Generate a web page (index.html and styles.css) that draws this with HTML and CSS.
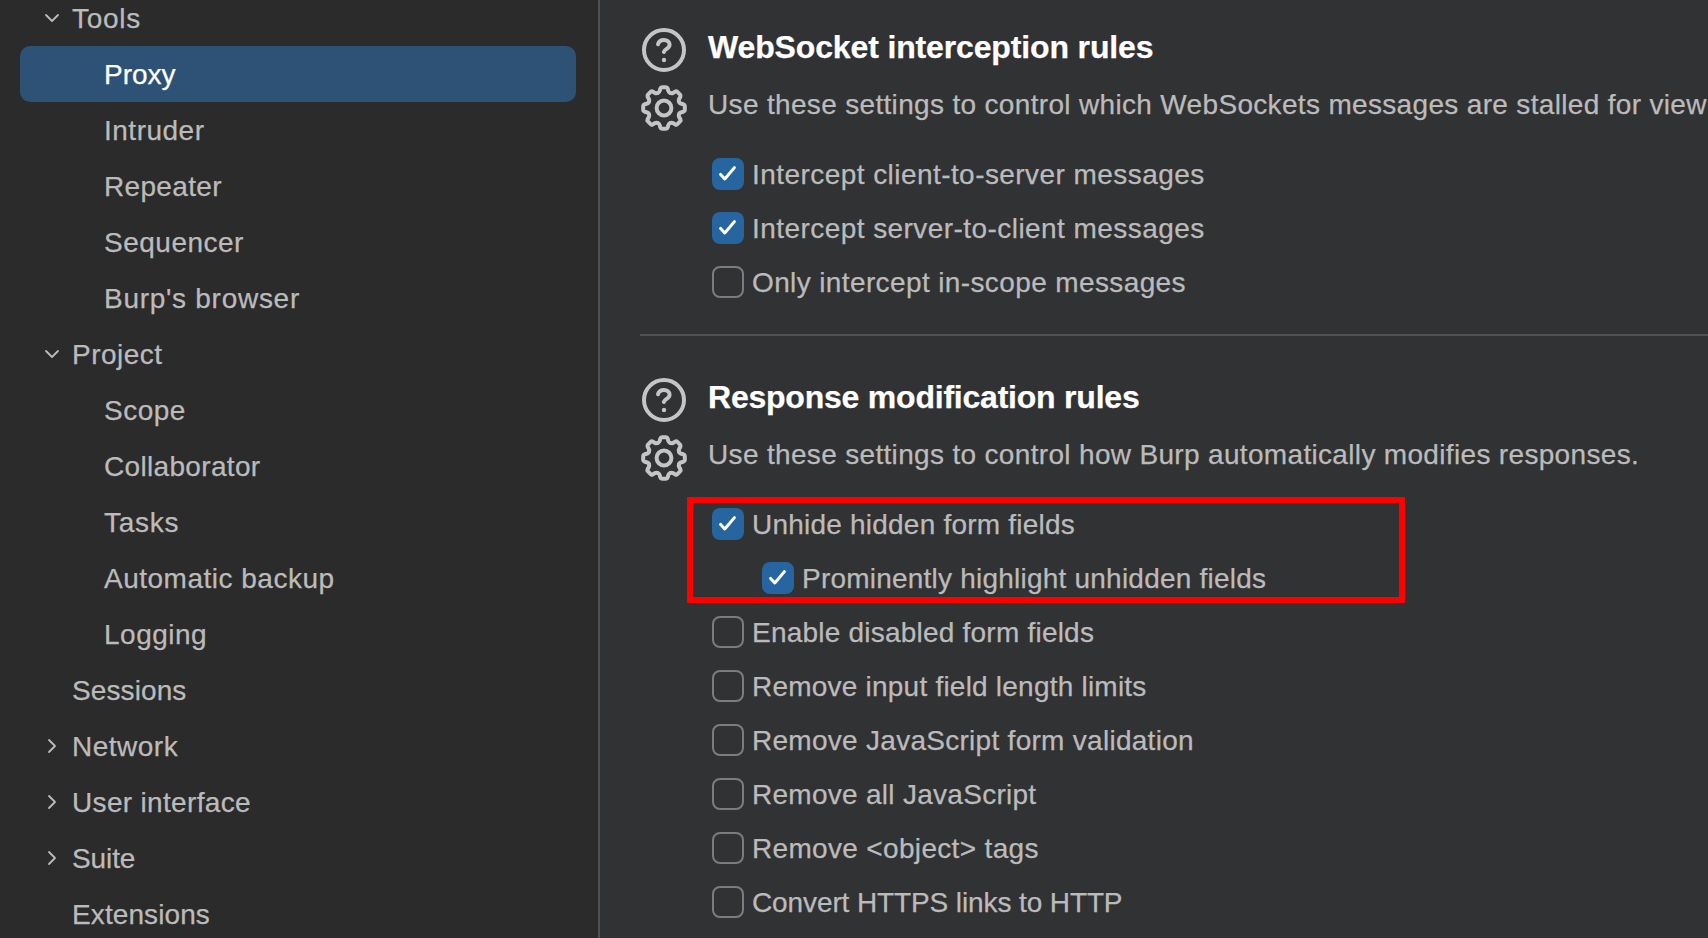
FILE: index.html
```html
<!DOCTYPE html>
<html lang="en">
<head>
<meta charset="utf-8">
<title>Settings</title>
<link rel="stylesheet" href="styles.css">
</head>
<body>
<svg class="defs" aria-hidden="true">
  <symbol id="down" viewBox="0 0 20 20"><path class="chevron-line" d="M4 7l6 6 6-6"/></symbol>
  <symbol id="right" viewBox="0 0 20 20"><path class="chevron-line" d="M7 4l6 6-6 6"/></symbol>
  <symbol id="tick" viewBox="0 0 32 32"><path class="tick-line" d="M8.6 16.4L12.8 21L22.4 9.6"/></symbol>
  <symbol id="help" viewBox="0 0 48 48">
    <circle class="icon-line" cx="24" cy="24" r="20"/>
    <path class="icon-line" d="M18 18.2C18.7 15.5 21 13.9 23.9 13.9c3.3 0 5.7 2 5.7 4.8 0 4.1-5.1 3.9-5.8 7.3"/>
    <circle class="icon-dot" cx="24" cy="34" r="2.2"/>
  </symbol>
  <symbol id="gear" viewBox="-24 -24 48 48">
    <g id="teeth">
      <path id="tooth" class="icon-line" d="M-6.2-15Q-4.6-15.65-4.2-17.4L-3.7-19.5Q-3.3-20.8-1.9-20.8H1.9Q3.3-20.8 3.7-19.5L4.2-17.4Q4.6-15.65 6.2-15"/>
      <use href="#tooth" transform="rotate(45)"/>
      <use href="#tooth" transform="rotate(90)"/>
      <use href="#tooth" transform="rotate(135)"/>
      <use href="#tooth" transform="rotate(180)"/>
      <use href="#tooth" transform="rotate(225)"/>
      <use href="#tooth" transform="rotate(270)"/>
      <use href="#tooth" transform="rotate(315)"/>
    </g>
    <circle class="icon-line" r="7.4"/>
  </symbol>
</svg>
<div class="app">
  <nav class="sidebar">
    <div class="row track-wide"><svg class="chevron"><use href="#down"/></svg>Tools</div>
    <div class="row child selected track-none">Proxy</div>
    <div class="row child track-loose">Intruder</div>
    <div class="row child">Repeater</div>
    <div class="row child track-loose">Sequencer</div>
    <div class="row child track-wide">Burp's browser</div>
    <div class="row track-loose"><svg class="chevron"><use href="#down"/></svg>Project</div>
    <div class="row child track-loose">Scope</div>
    <div class="row child">Collaborator</div>
    <div class="row child track-wide">Tasks</div>
    <div class="row child track-loose">Automatic backup</div>
    <div class="row child track-loose">Logging</div>
    <div class="row top track-slight">Sessions</div>
    <div class="row track-loose"><svg class="chevron"><use href="#right"/></svg>Network</div>
    <div class="row"><svg class="chevron"><use href="#right"/></svg>User interface</div>
    <div class="row track-tight"><svg class="chevron"><use href="#right"/></svg>Suite</div>
    <div class="row top track-slight">Extensions</div>
  </nav>
  <main class="content">
    <section class="section">
      <div class="icons"><svg class="icon"><use href="#help"/></svg><svg class="icon"><use href="#gear"/></svg></div>
      <div class="body">
        <h2 class="title">WebSocket interception rules</h2>
        <p class="desc">Use these settings to control which WebSockets messages are stalled for view</p>
        <div class="options">
          <label class="option track-option"><svg class="box on"><use href="#tick"/></svg>Intercept client-to-server messages</label>
          <label class="option track-option"><svg class="box on"><use href="#tick"/></svg>Intercept server-to-client messages</label>
          <label class="option track-scope"><span class="box off"></span>Only intercept in-scope messages</label>
        </div>
      </div>
    </section>
    <section class="section second">
      <div class="icons"><svg class="icon"><use href="#help"/></svg><svg class="icon"><use href="#gear"/></svg></div>
      <div class="body">
        <h2 class="title title-tight">Response modification rules</h2>
        <p class="desc">Use these settings to control how Burp automatically modifies responses.</p>
        <div class="options">
          <div class="highlight"></div>
          <label class="option track-form"><svg class="box on"><use href="#tick"/></svg>Unhide hidden form fields</label>
          <label class="option nested track-form"><svg class="box on"><use href="#tick"/></svg>Prominently highlight unhidden fields</label>
          <label class="option track-form"><span class="box off"></span>Enable disabled form fields</label>
          <label class="option track-form"><span class="box off"></span>Remove input field length limits</label>
          <label class="option track-script"><span class="box off"></span>Remove JavaScript form validation</label>
          <label class="option track-script"><span class="box off"></span>Remove all JavaScript</label>
          <label class="option"><span class="box off"></span>Remove &lt;object&gt; tags</label>
          <label class="option track-tight"><span class="box off"></span>Convert HTTPS links to HTTP</label>
        </div>
      </div>
    </section>
  </main>
</div>
</body>
</html>
```

FILE: styles.css
```css
* { box-sizing: border-box; }
body {
  margin: 0;
  overflow: hidden;
  background: #313234;
  color: #bbbbbb;
  font: 28px/40px "Liberation Sans", Arial, sans-serif;
  letter-spacing: 0.33px;
  -webkit-text-stroke: 0.25px currentColor;
}
.defs { display: none; }
.app { display: flex; height: 938px; overflow: hidden; }

/* Settings tree */
.sidebar {
  flex: none;
  width: 600px;
  height: 938px;
  overflow: hidden;
  background: #2b2b2b;
  border-right: 2px solid #515151;
}
.row {
  display: flex;
  align-items: center;
  height: 56px;
  margin: 0 22px 0 20px;
  padding: 2px 0 0 22px;
  border-radius: 10px;
  white-space: nowrap;
}
.row:first-child { margin-top: -10px; }
.child { padding-left: 84px; }
.top { padding-left: 52px; }
.selected { background: #2d5275; color: #ffffff; }
.chevron { width: 20px; height: 20px; margin: 0 10px 2px 0; }
.chevron-line { fill: none; stroke: #bbbbbb; stroke-width: 1.8; stroke-linecap: round; stroke-linejoin: round; }

/* Letter spacing */
.track-tight { letter-spacing: -0.11px; }
.track-none { letter-spacing: 0; }
.track-slight { letter-spacing: 0.1px; }
.track-form { letter-spacing: 0.22px; }
.track-script { letter-spacing: 0.28px; }
.track-scope { letter-spacing: 0.38px; }
.track-option { letter-spacing: 0.44px; }
.track-loose { letter-spacing: 0.5px; }
.track-wide { letter-spacing: 0.72px; }

/* Panels */
.content { flex: 1; min-width: 0; padding-left: 40px; }
.section {
  display: grid;
  grid-template-columns: 48px 1fr;
  column-gap: 20px;
  height: 336px;
  padding-top: 26px;
  border-bottom: 2px solid #515254;
}
.second { height: auto; padding-top: 40px; border-bottom: 0; }
.icons { display: flex; flex-direction: column; gap: 10px; }
.icon { display: block; width: 48px; height: 48px; }
.icon-line { fill: none; stroke: #c4c5c7; stroke-width: 4; stroke-linecap: round; stroke-linejoin: round; }
.icon-dot { fill: #c4c5c7; }
.body { min-width: 0; white-space: nowrap; }
.title {
  margin: 1px 0 18px;
  color: #ffffff;
  font-size: 32px;
  line-height: 40px;
  letter-spacing: -0.14px;
}
.title-tight { letter-spacing: -0.22px; }
.desc { margin: 0; overflow: hidden; }
.options { position: relative; margin-top: 22px; }
.option { display: flex; align-items: center; gap: 8px; height: 54px; padding: 2px 0 0 4px; }
.nested { padding-left: 54px; }
.box { flex: none; width: 32px; height: 32px; margin-bottom: 2px; border-radius: 8px; }
.on { background: #26659f; }
.off { border: 2px solid #7c7c7c; }
.tick-line { fill: none; stroke: #ffffff; stroke-width: 3; stroke-linecap: round; stroke-linejoin: round; }
.highlight {
  position: absolute;
  top: 0;
  left: -21px;
  width: 718px;
  height: 106px;
  border: 6px solid #ff0000;
}
```
